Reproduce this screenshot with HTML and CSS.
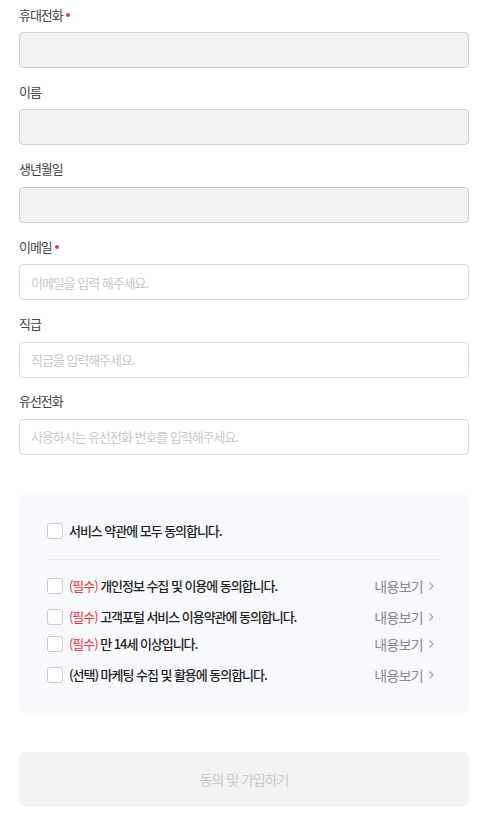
FILE: index.html
```html
<!DOCTYPE html>
<html lang="ko">
<head>
<meta charset="utf-8">
<link rel="stylesheet" href="styles.css">
</head>
<body>
<form class="form">
  <div class="field">
    <label class="label required">휴대전화</label>
    <div class="input disabled"></div>
  </div>
  <div class="field">
    <label class="label">이름</label>
    <div class="input disabled"></div>
  </div>
  <div class="field">
    <label class="label">생년월일</label>
    <div class="input disabled"></div>
  </div>
  <div class="field">
    <label class="label required">이메일</label>
    <div class="input"><span class="placeholder">이메일을 입력 해주세요.</span></div>
  </div>
  <div class="field">
    <label class="label">직급</label>
    <div class="input"><span class="placeholder">직급을 입력해주세요.</span></div>
  </div>
  <div class="field">
    <label class="label">유선전화</label>
    <div class="input"><span class="placeholder">사용하시는 유선전화 번호를 입력해주세요.</span></div>
  </div>

  <div class="agree">
    <div class="row all">
      <span class="check"></span>
      <span class="text">서비스 약관에 모두 동의합니다.</span>
    </div>
    <div class="divider"></div>
    <div class="row">
      <span class="check"></span>
      <span class="text"><em class="req">(필수)</em> 개인정보 수집 및 이용에 동의합니다.</span>
      <span class="more">내용보기<svg class="chev" viewBox="0 0 12 12" width="12" height="12"><path d="M4.5 2.5 L8 6 L4.5 9.5" fill="none" stroke="#a0a0a0" stroke-width="1.1"/></svg></span>
    </div>
    <div class="row">
      <span class="check"></span>
      <span class="text"><em class="req">(필수)</em> 고객포털 서비스 이용약관에 동의합니다.</span>
      <span class="more">내용보기<svg class="chev" viewBox="0 0 12 12" width="12" height="12"><path d="M4.5 2.5 L8 6 L4.5 9.5" fill="none" stroke="#a0a0a0" stroke-width="1.1"/></svg></span>
    </div>
    <div class="row tight">
      <span class="check"></span>
      <span class="text"><em class="req">(필수)</em> 만 14세 이상입니다.</span>
      <span class="more">내용보기<svg class="chev" viewBox="0 0 12 12" width="12" height="12"><path d="M4.5 2.5 L8 6 L4.5 9.5" fill="none" stroke="#a0a0a0" stroke-width="1.1"/></svg></span>
    </div>
    <div class="row">
      <span class="check"></span>
      <span class="text">(선택) 마케팅 수집 및 활용에 동의합니다.</span>
      <span class="more">내용보기<svg class="chev" viewBox="0 0 12 12" width="12" height="12"><path d="M4.5 2.5 L8 6 L4.5 9.5" fill="none" stroke="#a0a0a0" stroke-width="1.1"/></svg></span>
    </div>
  </div>

  <div class="submit">동의 및 가입하기</div>
</form>
</body>
</html>
```

FILE: styles.css
```css
* { box-sizing: border-box; }
html, body { margin: 0; padding: 0; background: #fff; }
body {
  font-family: "Noto Sans CJK KR", "Noto Sans", sans-serif;
  font-size: 13px;
  letter-spacing: -0.08em;
  color: #222;
}
.form {
  width: 450px;
  margin-left: 19px;
  padding-top: 4px;
}
.field {
  display: flex;
  flex-direction: column;
  margin-bottom: 13.4px;
}
.label {
  display: flex;
  align-items: center;
  height: 20px;
  margin-bottom: 8px;
  color: #444;
  font-size: 13px;
}
.label.required::after {
  content: "";
  width: 4px;
  height: 4px;
  border-radius: 50%;
  background: #f23a3a;
  margin-left: 3px;
  margin-top: 2px;
}
.input {
  height: 36px;
  border: 1px solid #d9d9d9;
  border-radius: 4px;
  background: #fff;
  display: flex;
  align-items: center;
  padding: 0 11px;
}
.input.disabled {
  background: #f2f2f2;
  border-color: #cfcfcf;
}
.placeholder {
  color: #c8c8c8;
  font-size: 13px;
}
.agree {
  margin-top: 39px;
  background: #f8f9fd;
  border-radius: 6px;
  padding: 28px 29px 29px 28px;
}
.row {
  display: flex;
  align-items: center;
  height: 18px;
}
.row + .row { margin-top: 13px; }
.row.tight { margin-top: 9px; }
.divider {
  height: 1px;
  background: #e6e7eb;
  margin: 19px 0 17px;
}
.check {
  width: 16px;
  height: 16px;
  border: 1px solid #cbcbcb;
  border-radius: 3px;
  background: #fff;
  flex: none;
  margin-right: 6px;
}
.text { color: #1e1e1e; font-weight: 500; }
.req { font-style: normal; color: #f0353a; font-weight: 400; }
.more {
  margin-left: auto;
  color: #888;
  font-size: 14px;
  letter-spacing: -0.05em;
  display: flex;
  align-items: center;
}
.chev { margin-left: 2px; margin-right: 3px; }
.submit {
  margin-top: 39px;
  height: 54px;
  border-radius: 6px;
  background: #f2f2f2;
  color: #c8c8c8;
  display: flex;
  align-items: center;
  justify-content: center;
  font-size: 14px;
}
```
